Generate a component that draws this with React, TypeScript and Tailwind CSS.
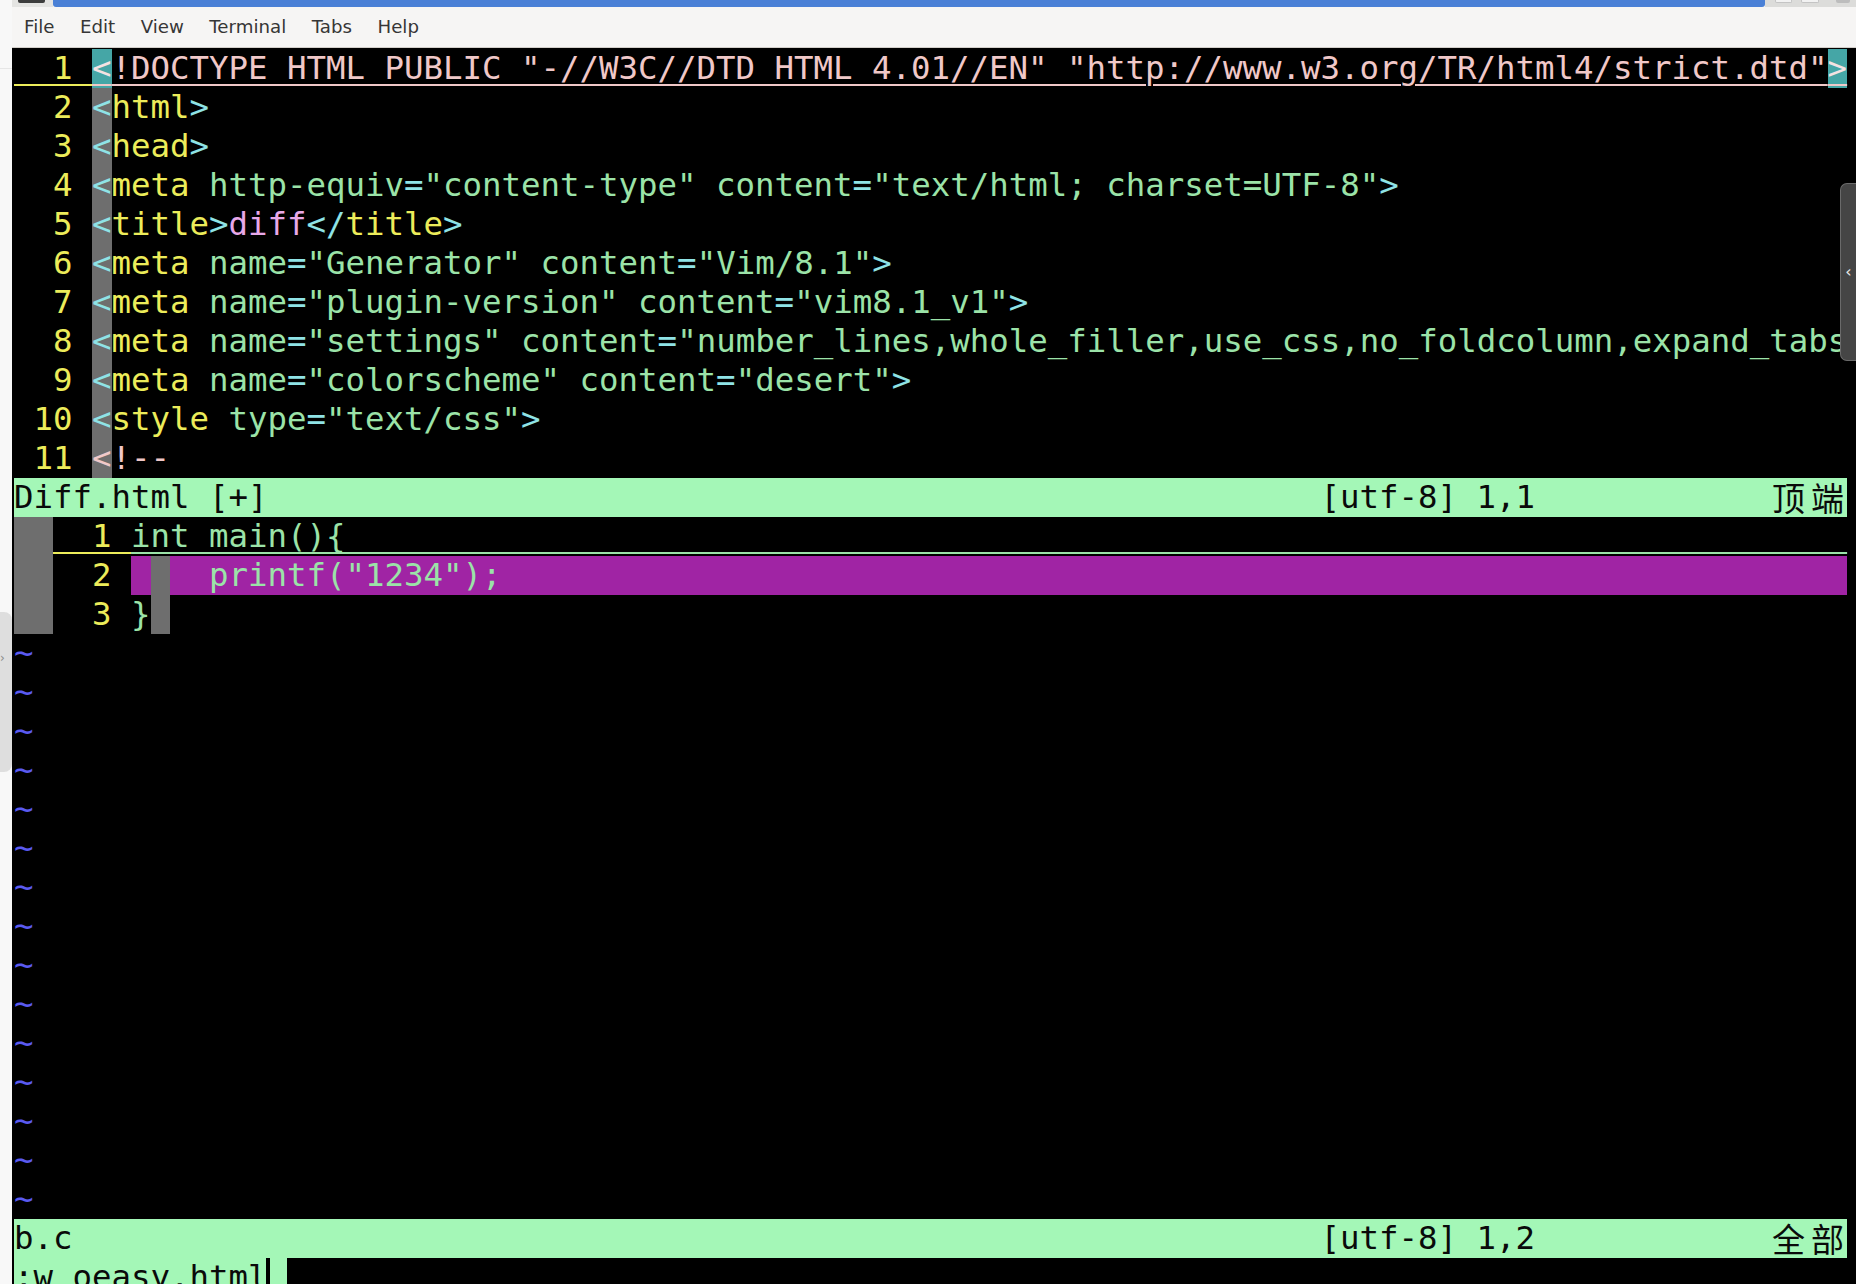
import React from "react";

type Seg = [string, string];

const Y = "text-[#ecec5a]";
const C = "text-[#8fe3e6]";
const G = "text-[#9be3a8]";
const P = "text-[#f0c8c8]";
const O = "text-[#e8a8e8]";
const GB = "bg-[#6e6e6e]";
const PB = "bg-[#a024a4]";
const TEAL = "bg-[#45a6a6] text-[#f4e2e2]";
const UY = "underline decoration-[#ecec5a] decoration-2 underline-offset-[5px]";
const UP = "underline decoration-[#f0c8c8] decoration-2 underline-offset-[5px]";
const UG = "underline decoration-[#9be3a8] decoration-2 underline-offset-[5px]";

const pad = (n: number) => " ".repeat(n);

const meta = (num: string, name: string, content: string, close = true): Seg[] => {
  const segs: Seg[] = [
    [num, Y],
    ["<", `${C} ${GB}`],
    ["meta", Y],
    [" name", G],
    ["=", C],
    [`"${name}"`, G],
    [" content", G],
    ["=", C],
    [close ? `"${content}"` : `"${content}`, G],
  ];
  if (close) segs.push([">", C]);
  return segs;
};

const upper: Seg[][] = [
  [
    ["  1 ", `${Y} ${UY}`],
    ["<", `${TEAL} ${UP}`],
    ['!DOCTYPE HTML PUBLIC "-//W3C//DTD HTML 4.01//EN" "http://www.w3.org/TR/html4/strict.dtd"', `${P} ${UP}`],
    [">", `${TEAL} ${UP}`],
  ],
  [
    ["  2 ", Y],
    ["<", `${C} ${GB}`],
    ["html", Y],
    [">", C],
  ],
  [
    ["  3 ", Y],
    ["<", `${C} ${GB}`],
    ["head", Y],
    [">", C],
  ],
  [
    ["  4 ", Y],
    ["<", `${C} ${GB}`],
    ["meta", Y],
    [" http-equiv", G],
    ["=", C],
    ['"content-type"', G],
    [" content", G],
    ["=", C],
    ['"text/html; charset=UTF-8"', G],
    [">", C],
  ],
  [
    ["  5 ", Y],
    ["<", `${C} ${GB}`],
    ["title", Y],
    [">", C],
    ["diff", O],
    ["</", C],
    ["title", Y],
    [">", C],
  ],
  meta("  6 ", "Generator", "Vim/8.1"),
  meta("  7 ", "plugin-version", "vim8.1_v1"),
  meta("  8 ", "settings", "number_lines,whole_filler,use_css,no_foldcolumn,expand_tabs", false),
  meta("  9 ", "colorscheme", "desert"),
  [
    [" 10 ", Y],
    ["<", `${C} ${GB}`],
    ["style", Y],
    [" type", G],
    ["=", C],
    ['"text/css"', G],
    [">", C],
  ],
  [
    [" 11 ", Y],
    ["<", `${P} ${GB}`],
    ["!--", P],
  ],
];

const lower: Seg[][] = [
  [
    ["  ", GB],
    ["  1 ", `${Y} ${UY}`],
    ["int main(){" + pad(77), `${G} ${UG}`],
  ],
  [
    ["  ", GB],
    ["  2 ", Y],
    [" ", PB],
    [" ", GB],
    ['  printf("1234");' + pad(69), `${G} ${PB}`],
  ],
  [
    ["  ", GB],
    ["  3 ", Y],
    ["}", G],
    [" ", GB],
  ],
];

function Row({ segs }: { segs: Seg[] }) {
  return (
    <div className="flex h-[39px] shrink-0">
      {segs.map((s, i) => (
        <span key={i} className={`block h-[39px] whitespace-pre ${s[1]}`}>
          {s[0]}
        </span>
      ))}
    </div>
  );
}

function Status({ left, pos, tag }: { left: string; pos: string; tag: string }) {
  const chars = Array.from(tag);
  return (
    <div className="flex h-[39px] w-[1833px] shrink-0 bg-[#a4f7b7] text-[#0a0a0a]">
      <span className="block w-[1306.5px] whitespace-pre">{left}</span>
      <span className="block w-[448.5px] whitespace-pre">{pos}</span>
      {chars.map((c, i) => (
        <span
          key={i}
          className="flex w-[39px] h-[39px] items-center justify-center font-['Noto_Sans_CJK_SC',sans-serif] text-[33px] leading-[39px]"
        >
          {c}
        </span>
      ))}
    </div>
  );
}

export default function App() {
  const tildes = Array.from({ length: 15 });
  const menu = ["File", "Edit", "View", "Terminal", "Tabs", "Help"];
  return (
    <div className="relative flex w-[1856px] h-[1284px] overflow-hidden bg-[#f8f8f8]">
      {/* left strip */}
      <div className="flex w-[12px] shrink-0 flex-col">
        <div className="h-[68px] shrink-0" />
        <div className="h-[1px] shrink-0 bg-[#e6e6e6]" />
      </div>

      {/* main column */}
      <div className="flex min-w-0 flex-1 flex-col">
        {/* window top */}
        <div className="flex h-[7px] shrink-0">
          <div className="w-[41px] bg-[#e4e4e2] pl-[6px]">
            <div className="h-[3px] w-[27px] rounded-b-[2px] bg-[#3d3d3d]" />
          </div>
          <div className="flex-1 rounded-b-[3px] bg-[#4a80d6]" />
          <div className="flex w-[91px] gap-[9px] bg-[#dcdcda] pl-[10px]">
            <div className="h-[3px] w-[17px] rounded-b-[2px] bg-[#f2f2f2] border-x border-b border-[#c4c4c4]" />
            <div className="h-[3px] w-[18px] rounded-b-[2px] bg-[#f2f2f2] border-x border-b border-[#c4c4c4]" />
            <div className="h-[3px] w-[14px] ml-[8px] rounded-b-[2px] bg-[#bdbdbd]" />
          </div>
        </div>

        {/* menu bar */}
        <div className="flex h-[41px] shrink-0 items-center gap-[25.5px] border-b border-[#d3cfca] bg-[#f6f5f4] pl-[12px] font-['DejaVu_Sans',sans-serif] text-[18.2px] text-[#363636]">
          {menu.map((m) => (
            <span key={m}>{m}</span>
          ))}
        </div>

        {/* terminal */}
        <div className="flex min-h-0 flex-1 flex-col overflow-hidden bg-black pl-[2px] pt-[1px] font-['DejaVu_Sans_Mono','Noto_Sans_CJK_SC',monospace] text-[32.4px] leading-[39px]">
          {upper.map((r, i) => (
            <Row key={`u${i}`} segs={r} />
          ))}
          <Status left="Diff.html [+]" pos="[utf-8] 1,1" tag="顶端" />
          {lower.map((r, i) => (
            <Row key={`l${i}`} segs={r} />
          ))}
          {tildes.map((_, i) => (
            <div key={`t${i}`} className="h-[39px] shrink-0 text-[#5a5af0]">
              ~
            </div>
          ))}
          <Status left="b.c" pos="[utf-8] 1,2" tag="全部" />
          <div className="flex h-[39px] shrink-0">
            <span className="block h-[39px] w-[252px] whitespace-pre bg-[#a4f7b7] text-[#0a0a0a]">:w oeasy.html</span>
            <span className="block h-[39px] w-[4px]" />
            <span className="block h-[39px] w-[17px] bg-[#a4f7b7]" />
          </div>
        </div>
      </div>

      {/* left edge panel overlay */}
      <div className="absolute left-0 top-[612px] flex h-[160px] w-[12px] items-start justify-start rounded-r-[8px] bg-[#dedede] pt-[40px] text-[12px] leading-none text-[#8a8a8a]">
        <span className="font-['DejaVu_Sans',sans-serif]">›</span>
      </div>

      {/* right edge panel overlay */}
      <div className="absolute right-0 top-[183px] flex h-[178px] w-[16px] items-center justify-center rounded-l-[7px] border-y border-l border-[#6a6a6a] bg-[#454545] text-[16px] leading-none text-[#e8e8e8]">
        <span className="font-['DejaVu_Sans',sans-serif]">‹</span>
      </div>
    </div>
  );
}
